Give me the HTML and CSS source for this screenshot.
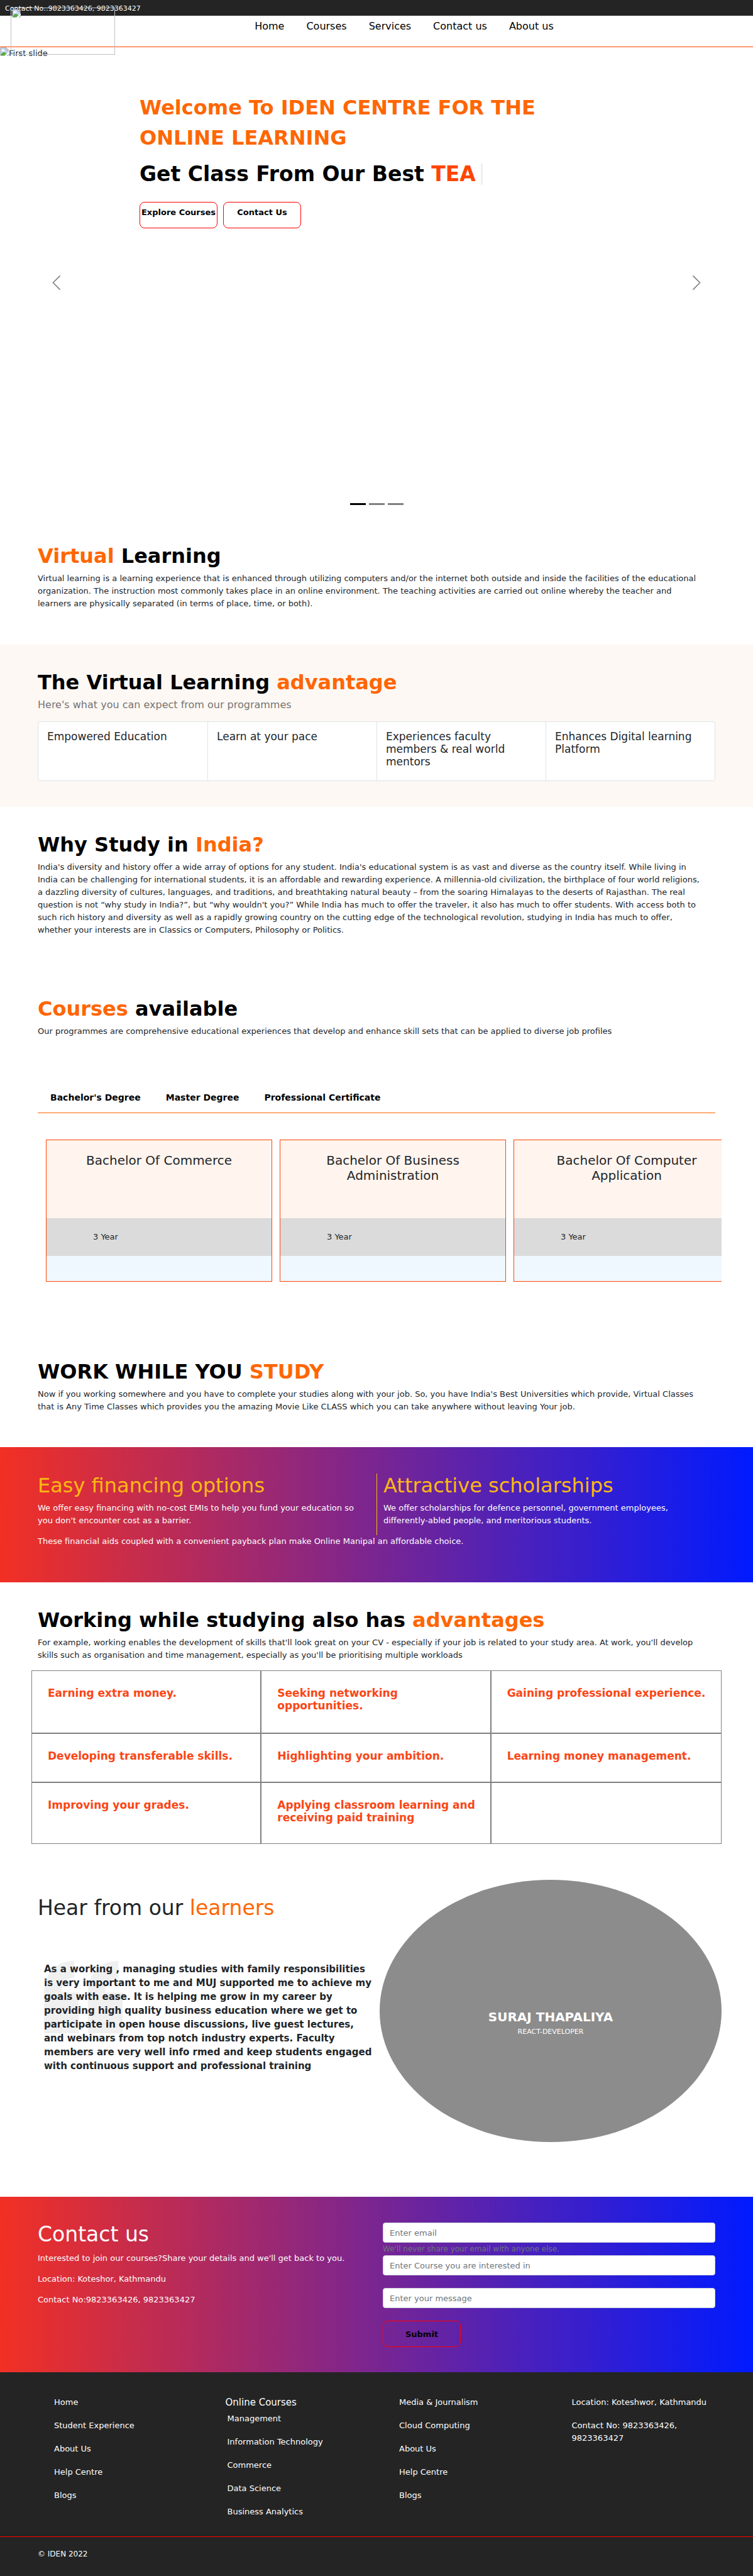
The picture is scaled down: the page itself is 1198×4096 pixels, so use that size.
FILE: index.html
```html
<!DOCTYPE html>
<html lang="en">
<head>
<meta charset="utf-8">
<meta name="viewport" content="width=device-width, initial-scale=1">
<title>IDEN Centre for Online Learning</title>
<link rel="stylesheet" href="styles.css">
</head>
<body>
<svg class="sprite" aria-hidden="true">
  <symbol id="missing" viewBox="0 0 16 16">
    <path d="M1 1h10l4 4v10H1z" fill="#c4d7f7" stroke="#999" stroke-width="1"/>
    <path d="M11 1v4h4z" fill="#fff" stroke="#999" stroke-width="1"/>
    <path d="M3 6c0-2 3-3 4-1 2 0 2 2 1 2H4C3 7 3 6 3 6z" fill="#fff"/>
    <path d="M1 15c2-5 6-7 9-5l2 2-4 3z" fill="#57ad3b"/>
    <path d="M8 16l8-8v3l-4 5z" fill="#fff"/>
  </symbol>
</svg>
<div class="topbar">Contact No::9823363426, 9823363427</div>
<header class="header">
  <a class="logo" href="#" aria-label="IDEN home"><svg class="missing"><use href="#missing"/></svg></a>
  <nav class="nav">
    <a href="#">Home</a><a href="#courses">Courses</a><a href="#">Services</a><a href="#contact">Contact us</a><a href="#">About us</a>
  </nav>
</header>

<section class="hero">
  <div class="slide-alt"><svg class="missing"><use href="#missing"/></svg>First slide</div>
  <div class="hero-copy">
    <h1>Welcome To IDEN CENTRE FOR THE ONLINE LEARNING</h1>
    <p class="typed">Get Class From Our Best <span class="typed-word">TEA</span></p>
    <div class="hero-buttons">
      <button type="button" class="btn">Explore Courses</button>
      <button type="button" class="btn">Contact Us</button>
    </div>
  </div>
  <button type="button" class="arrow arrow-prev" aria-label="Previous"><svg viewBox="0 0 16 16"><path d="M11.3 1.7L5 8l6.3 6.3"/></svg></button>
  <button type="button" class="arrow arrow-next" aria-label="Next"><svg viewBox="0 0 16 16"><path d="M4.7 1.7L11 8l-6.3 6.3"/></svg></button>
  <div class="dots"><span class="dot active"></span><span class="dot"></span><span class="dot"></span></div>
</section>

<main>
<section class="section virtual">
  <h2><em>Virtual</em> Learning</h2>
  <p class="copy">Virtual learning is a learning experience that is enhanced through utilizing computers and/or the internet both outside and inside the facilities of the educational organization. The instruction most commonly takes place in an online environment. The teaching activities are carried out online whereby the teacher and learners are physically separated (in terms of place, time, or both).</p>
</section>

<section class="section advantage">
  <h2>The Virtual Learning <em>advantage</em></h2>
  <p class="subtitle">Here's what you can expect from our programmes</p>
  <ul class="perks">
    <li>Empowered Education</li>
    <li>Learn at your pace</li>
    <li>Experiences faculty members &amp; real world mentors</li>
    <li>Enhances Digital learning Platform</li>
  </ul>
</section>

<section class="section why">
  <h2>Why Study in <em>India?</em></h2>
  <p class="copy">India's diversity and history offer a wide array of options for any student. India's educational system is as vast and diverse as the country itself. While living in India can be challenging for international students, it is an affordable and rewarding experience. A millennia-old civilization, the birthplace of four world religions, a dazzling diversity of cultures, languages, and traditions, and breathtaking natural beauty – from the soaring Himalayas to the deserts of Rajasthan. The real question is not “why study in India?”, but “why wouldn't you?” While India has much to offer the traveler, it also has much to offer students. With access both to such rich history and diversity as well as a rapidly growing country on the cutting edge of the technological revolution, studying in India has much to offer, whether your interests are in Classics or Computers, Philosophy or Politics.</p>
</section>

<section class="section courses" id="courses">
  <h2><em>Courses</em> available</h2>
  <p class="copy">Our programmes are comprehensive educational experiences that develop and enhance skill sets that can be applied to diverse job profiles</p>
  <div class="tabs">
    <button type="button">Bachelor's Degree</button>
    <button type="button">Master Degree</button>
    <button type="button">Professional Certificate</button>
  </div>
  <div class="cards">
    <article class="card"><h3>Bachelor Of Commerce</h3><p>3 Year</p></article>
    <article class="card"><h3>Bachelor Of Business Administration</h3><p>3 Year</p></article>
    <article class="card"><h3>Bachelor Of Computer Application</h3><p>3 Year</p></article>
  </div>
</section>

<section class="section work">
  <h2>WORK WHILE YOU <em>STUDY</em></h2>
  <p class="copy">Now if you working somewhere and you have to complete your studies along with your job. So, you have India's Best Universities which provide, Virtual Classes that is Any Time Classes which provides you the amazing Movie Like CLASS which you can take anywhere without leaving Your job.</p>
</section>

<section class="band finance">
  <div class="finance-cols">
    <div class="finance-col">
      <h2>Easy financing options</h2>
      <p>We offer easy financing with no-cost EMIs to help you fund your education so you don't encounter cost as a barrier.</p>
    </div>
    <div class="finance-col">
      <h2>Attractive scholarships</h2>
      <p>We offer scholarships for defence personnel, government employees, differently-abled people, and meritorious students.</p>
    </div>
  </div>
  <p>These financial aids coupled with a convenient payback plan make Online Manipal an affordable choice.</p>
</section>

<section class="section working">
  <h2>Working while studying also has <em>advantages</em></h2>
  <p class="copy">For example, working enables the development of skills that'll look great on your CV - especially if your job is related to your study area. At work, you'll develop skills such as organisation and time management, especially as you'll be prioritising multiple workloads</p>
  <ul class="benefits">
    <li>Earning extra money.</li>
    <li>Seeking networking opportunities.</li>
    <li>Gaining professional experience.</li>
    <li>Developing transferable skills.</li>
    <li>Highlighting your ambition.</li>
    <li>Learning money management.</li>
    <li>Improving your grades.</li>
    <li>Applying classroom learning and receiving paid training</li>
    <li></li>
  </ul>
</section>

<section class="learners">
  <div class="quote-side">
    <h2>Hear from our <em>learners</em></h2>
    <blockquote>
      <svg class="quote-mark" viewBox="0 0 150 138" aria-hidden="true"><path d="M0 138V62C0 24 22 0 58 0V32C42 32 33 44 33 60H66V138Z"/><path d="M84 138V62C84 24 106 0 142 0V32C126 32 117 44 117 60H150V138Z"/></svg>
      <p>As a working , managing studies with family responsibilities is very important to me and MUJ supported me to achieve my goals with ease. It is helping me grow in my career by providing high quality business education where we get to participate in open house discussions, live guest lectures, and webinars from top notch industry experts. Faculty members are very well info rmed and keep students engaged with continuous support and professional training</p>
    </blockquote>
  </div>
  <div class="portrait"><strong>SURAJ THAPALIYA</strong><span>REACT-DEVELOPER</span></div>
</section>

<section class="band contact" id="contact">
  <div>
    <h2>Contact us</h2>
    <p>Interested to join our courses?Share your details and we'll get back to you.</p>
    <p>Location: Koteshor, Kathmandu</p>
    <p>Contact No:9823363426, 9823363427</p>
  </div>
  <form>
    <input type="email" placeholder="Enter email" aria-label="Email">
    <small>We'll never share your email with anyone else.</small>
    <input type="text" placeholder="Enter Course you are interested in" aria-label="Course">
    <input type="text" placeholder="Enter your message" aria-label="Message">
    <button type="submit" class="btn btn-submit">Submit</button>
  </form>
</section>
</main>

<footer class="footer">
  <div class="footer-cols">
    <ul><li><a href="#">Home</a></li><li><a href="#">Student Experience</a></li><li><a href="#">About Us</a></li><li><a href="#">Help Centre</a></li><li><a href="#">Blogs</a></li></ul>
    <div class="footer-courses">
      <h3>Online Courses</h3>
      <ul><li><a href="#">Management</a></li><li><a href="#">Information Technology</a></li><li><a href="#">Commerce</a></li><li><a href="#">Data Science</a></li><li><a href="#">Business Analytics</a></li></ul>
    </div>
    <ul><li><a href="#">Media &amp; Journalism</a></li><li><a href="#">Cloud Computing</a></li><li><a href="#">About Us</a></li><li><a href="#">Help Centre</a></li><li><a href="#">Blogs</a></li></ul>
    <ul><li>Location: Koteshwor, Kathmandu</li><li>Contact No: 9823363426, 9823363427</li></ul>
  </div>
  <div class="copyright">© IDEN 2022</div>
</footer>
</body>
</html>
```
FILE: styles.css
```css
* { box-sizing: border-box; }
body {
  margin: 0;
  background: #fff;
  color: #212529;
  font: 13px/20px "DejaVu Sans", sans-serif;
}
h1, h2, h3, p, ul, blockquote { margin: 0; padding: 0; }
ul { list-style: none; }
a { color: inherit; text-decoration: none; }
button { font-family: inherit; cursor: pointer; }
em { color: #f60; font-style: normal; }
h2 { font-size: 32px; line-height: 38px; }
.sprite { position: absolute; width: 0; height: 0; }
.missing { width: 14px; height: 14px; display: block; }

/* Header */
.topbar {
  padding: 4px 8px 1px;
  background: #242424;
  color: #fff;
  font-size: 11px;
}
.header {
  position: relative;
  height: 50px;
  border-bottom: 1px solid #ff4500;
}
.logo {
  position: absolute;
  top: -13px;
  left: 17px;
  z-index: 1;
  width: 166px;
  height: 75px;
  padding: 1px;
  border: 1px solid #c0c0c0;
}
.nav {
  display: flex;
  justify-content: center;
  gap: 35px;
  padding: 7px 0 0 88px;
  color: #000;
  font-size: 16px;
}

/* Carousel */
.hero { position: relative; height: 749px; }
.slide-alt { display: flex; align-items: flex-start; height: 72px; }
.hero-copy { width: 660px; margin-left: 222px; }
.hero h1 { color: #f60; font-size: 32px; line-height: 48px; }
.typed { padding-top: 10px; color: #000; font-size: 33px; font-weight: 700; line-height: 48px; }
.typed-word {
  display: inline-block;
  padding-right: 8px;
  border-right: 3px solid #f0f0f0;
  color: #ff4500;
  line-height: 34px;
}
.hero-buttons { display: flex; gap: 9px; padding-top: 20px; }
.btn {
  display: block;
  width: 124px;
  height: 42px;
  padding: 0 0 10px;
  border: 1px solid red;
  border-radius: 8px;
  background: none;
  color: #000;
  font-size: 13px;
  font-weight: 700;
  white-space: nowrap;
}
.arrow {
  position: absolute;
  top: 361px;
  width: 27px;
  height: 27px;
  padding: 0;
  border: 0;
  background: none;
}
.arrow svg { display: block; fill: none; stroke: #808080; stroke-width: 1; stroke-linecap: round; stroke-linejoin: round; }
.arrow-prev { left: 76px; }
.arrow-next { right: 76px; }
.dots { position: absolute; right: 0; bottom: 21px; left: 0; display: flex; justify-content: center; gap: 5px; }
.dot { width: 25px; height: 3px; background: #808080; }
.dot.active { background: #000; }

/* Text sections */
.section { padding: 41px 60px 0; }
.section > h2 { margin-bottom: 7px; color: #000; }
.copy { padding-right: 22px; }
.virtual { height: 201px; }
.advantage { height: 258px; background: #fdf8f4; }
.subtitle { color: #757575; font-size: 16px; }
.perks {
  display: grid;
  grid-template-columns: repeat(4, 1fr);
  height: 95px;
  margin-top: 16px;
  overflow: hidden;
  border: 1px solid #dee2e6;
  border-radius: 4px;
  background: #fff;
  font-size: 17px;
}
.perks li { padding: 13px 14px; }
.perks li + li { border-left: 1px solid #dee2e6; }
.why { height: 261px; }

/* Courses */
.courses { height: 577px; }
.tabs {
  display: flex;
  gap: 40px;
  margin-top: 72px;
  padding: 0 20px;
  height: 48px;
  border-bottom: 1px solid #f60;
}
.tabs button { padding: 0 0 2px; border: 0; background: none; color: #000; font-size: 14px; font-weight: 700; }
.cards { display: flex; gap: 12px; margin: 42px -10px 0 13px; overflow: hidden; }
.card {
  flex: 0 0 360px;
  border: 1px solid #ff4500;
  background: #f0f8ff;
  padding-bottom: 40px;
}
.card h3 { height: 124px; padding: 20px 40px; background: #fff4ee; font-size: 20px; font-weight: 400; line-height: 24px; text-align: center; }
.card p { padding: 20px 74px; background: #dbdbdb; }
.work { height: 180px; }

/* Gradient bands */
.band { background: linear-gradient(to right, #f23024, #001aff); color: #fff; }
.band h2 { font-weight: 400; }
.finance { height: 215px; padding: 42px 60px 0; }
.finance-cols { display: grid; grid-template-columns: 1fr 1fr; height: 98px; }
.finance-col { padding-right: 10px; }
.finance-col + .finance-col { padding: 0 0 0 10px; border-left: 1px solid #fdb813; }
.finance h2 { padding-bottom: 7px; color: #fdb813; }

/* Benefits */
.working { height: 415px; }
.benefits {
  display: grid;
  grid-template-columns: repeat(3, 1fr);
  grid-template-rows: 98px 78px 98px;
  margin: 14px -10px 0;
  border: 1px solid #808080;
  color: #fa4616;
  font-size: 17px;
  font-weight: 700;
}
.benefits li { padding: 25px 10px 0 25px; }
.benefits li:not(:nth-child(3n)) { padding-right: 16px; border-right: 2px solid #808080; }
.benefits li:nth-child(n + 4) { border-top: 2px solid #808080; }

/* Testimonial */
.learners {
  display: grid;
  grid-template-columns: 1fr 1fr;
  padding: 58px 50px 87px 60px;
}
.quote-side h2 { padding-top: 26px; font-size: 33px; font-weight: 400; }
blockquote { position: relative; margin: 67px 0 0 10px; padding-right: 6px; font-size: 15px; font-weight: 700; line-height: 22px; }
blockquote p { position: relative; }
.quote-mark { position: absolute; top: -2px; left: 0; width: 125px; height: 115px; fill: #f0f0f0; }
.portrait {
  display: flex;
  flex-direction: column;
  align-items: center;
  justify-content: center;
  height: 417px;
  padding-top: 38px;
  border-radius: 50%;
  background: #8c8c8c;
  color: #fff;
  font-size: 11px;
}
.portrait strong { font-size: 20px; line-height: 28px; }

/* Contact */
.contact { display: grid; grid-template-columns: 1fr 1fr; gap: 20px; height: 279px; padding: 41px 60px 0; }
.contact h2 { padding-bottom: 9px; font-size: 33px; }
.contact p { margin-bottom: 13px; }
.contact form { display: flex; flex-direction: column; align-items: flex-start; }
.contact input {
  width: 100%;
  height: 32px;
  margin-bottom: 20px;
  padding: 0 10px;
  border: 1px solid #ced4da;
  border-radius: 4px;
  font: inherit;
}
.contact input:first-child { margin-bottom: 0; }
.contact input::placeholder { color: #6c757d; opacity: 1; }
.contact small { color: #6c757d; font-size: 12px; }
.btn-submit { padding: 0; }

/* Footer */
.footer { background: #242424; color: #fff; }
.footer-cols { display: grid; grid-template-columns: repeat(4, 1fr); height: 261px; padding: 38px 50px 0; }
.footer-cols > ul { padding-left: 36px; }
.footer-cols li { margin-bottom: 17px; }
.footer-courses { padding-left: 34px; }
.footer-courses ul { padding: 6px 0 0 3px; }
.footer-courses h3 { font-size: 15px; font-weight: 400; line-height: 20px; }
.copyright { height: 63px; padding: 17px 60px; border-top: 1px solid red; font-size: 12px; }
```
